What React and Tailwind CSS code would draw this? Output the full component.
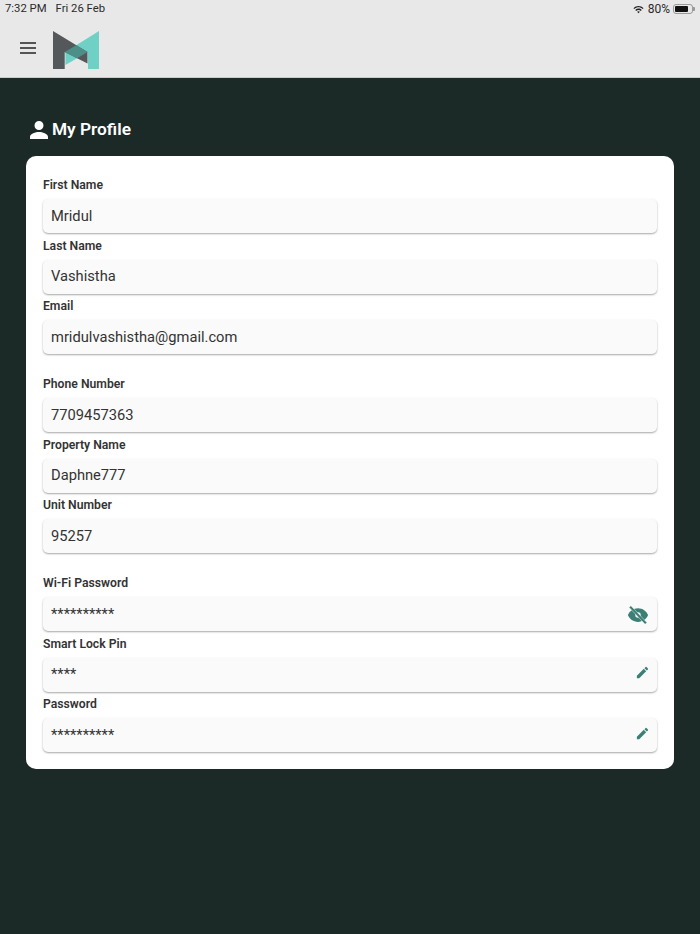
const font = "font-['Roboto',sans-serif]";

const groups = [
  [
    { label: "First Name", value: "Mridul" },
    { label: "Last Name", value: "Vashistha" },
    { label: "Email", value: "mridulvashistha@gmail.com" },
  ],
  [
    { label: "Phone Number", value: "7709457363" },
    { label: "Property Name", value: "Daphne777" },
    { label: "Unit Number", value: "95257" },
  ],
  [
    { label: "Wi-Fi Password", value: "**********", icon: "eye" },
    { label: "Smart Lock Pin", value: "****", icon: "edit" },
    { label: "Password", value: "**********", icon: "edit" },
  ],
];

const PencilIcon = () => (
  <svg viewBox="0 0 24 24" className="w-[15px] h-[15px] -mr-[1px] -mt-[4px] fill-[#3b7f75]">
    <path d="M3 17.25V21h3.75L17.81 9.94l-3.75-3.75L3 17.25zM20.71 7.04a1 1 0 0 0 0-1.41l-2.34-2.34a1 1 0 0 0-1.41 0l-1.83 1.83 3.75 3.75 1.83-1.83z" />
  </svg>
);

const EyeOffIcon = () => (
  <svg viewBox="0 0 24 24" className="w-[22px] h-[22px] mt-[2px] fill-[#3b7f75]">
    <path d="M12 4.500C7 4.500 2.730 7.610 1 12c1.730 4.390 6 7.500 11 7.500s9.270-3.110 11-7.500c-1.730-4.390-6-7.500-11-7.500zM12 15a3 3 0 1 1 0-6 3 3 0 0 1 0 6z" />
    <path d="M4.200 1.800 2.300 3.700l17.500 18.500 1.900-1.900z" stroke="#fafafa" strokeWidth="0.5" />
  </svg>
);

const Field = ({ label, value, icon }) => (
  <div className="h-[60.5px]">
    <div className="h-[26px] pt-[3px] text-[12.2px] leading-[18px] font-semibold text-[#333333]">{label}</div>
    <div className="h-[34px] flex items-center justify-between px-2 rounded-[5px] bg-[#fafafa] shadow-[0_1px_2px_rgba(0,0,0,0.35)]">
      <span className="text-[14.7px] text-[#333333]">{value}</span>
      {icon === "eye" && <EyeOffIcon />}
      {icon === "edit" && <PencilIcon />}
    </div>
  </div>
);

export default function App() {
  return (
    <div className={`${font} w-[700px] h-[934px] bg-[#1b2a27] flex flex-col`}>
      <header className="h-[78px] bg-[#e8e8e8] border-b border-[#c9cccb] shrink-0">
        <div className="h-[18px] flex items-center justify-between pl-[5px] pr-[5px] text-[11.3px] text-[#2a2a2a]">
          <div className="flex gap-[9px]">
            <span>7:32 PM</span>
            <span>Fri 26 Feb</span>
          </div>
          <div className="flex items-center">
            <svg viewBox="0 0 24 24" className="w-[11px] h-[11px] fill-[#222222]">
              <path d="M1 9l2 2c5-5 13-5 18 0l2-2C17 3 7 3 1 9zm4 4 2 2c2.800-2.800 7.200-2.800 10 0l2-2c-3.900-3.900-10.100-3.900-14 0zm4 4 3 3 3-3c-1.700-1.700-4.300-1.700-6 0z" />
            </svg>
            <span className="ml-[4px] text-[12px]">80%</span>
            <div className="ml-[3px] w-[20px] h-[10px] rounded-[3px] border border-[#999999] p-[1px]">
              <div className="h-full w-[80%] rounded-[1px] bg-[#111111]" />
            </div>
            <div className="w-[2px] h-[4px] rounded-r-[1px] bg-[#999999]" />
          </div>
        </div>
        <div className="flex items-center h-[59px] pl-[20px]">
          <div className="flex flex-col gap-[3px] w-[16px]">
            <div className="h-[2px] bg-[#555555]" />
            <div className="h-[2px] bg-[#555555]" />
            <div className="h-[2px] bg-[#555555]" />
          </div>
          <svg viewBox="0 0 46 38" className="ml-[17px] w-[46px] h-[38px] mt-[5px]">
            <polygon points="46,0 46,38 35,38 35,21 12.400,34 12.400,21" fill="#6fd0c5" />
            <polygon points="0,0 34.500,21 34.500,32.500 11.700,21 11.700,38 0,38" fill="#55585b" />
            <polygon points="23.300,14.200 34.500,21 24.100,27.300 11.700,21" fill="#4d8f88" />
          </svg>
        </div>
      </header>

      <main className="px-[26px] pt-[37px]">
        <h1 className="h-[30px] mb-[11px] flex items-center gap-[1px] pl-[1px] text-[17.3px] font-semibold text-white">
          <svg viewBox="0 0 24 24" className="w-[24px] h-[24px] fill-white">
            <path d="M12 12a4.500 4.500 0 1 0 0-9 4.500 4.500 0 0 0 0 9zm0 2c-3.300 0-9 1.700-9 5v2h18v-2c0-3.300-5.700-5-9-5z" />
          </svg>
          My Profile
        </h1>
        <section className="bg-white rounded-[10px] px-[17px] pt-[17px] pb-[16.5px] flex flex-col gap-[17.5px]">
          {groups.map((fields, i) => (
            <div key={i}>
              {fields.map((f) => (
                <Field key={f.label} {...f} />
              ))}
            </div>
          ))}
        </section>
      </main>
    </div>
  );
}
